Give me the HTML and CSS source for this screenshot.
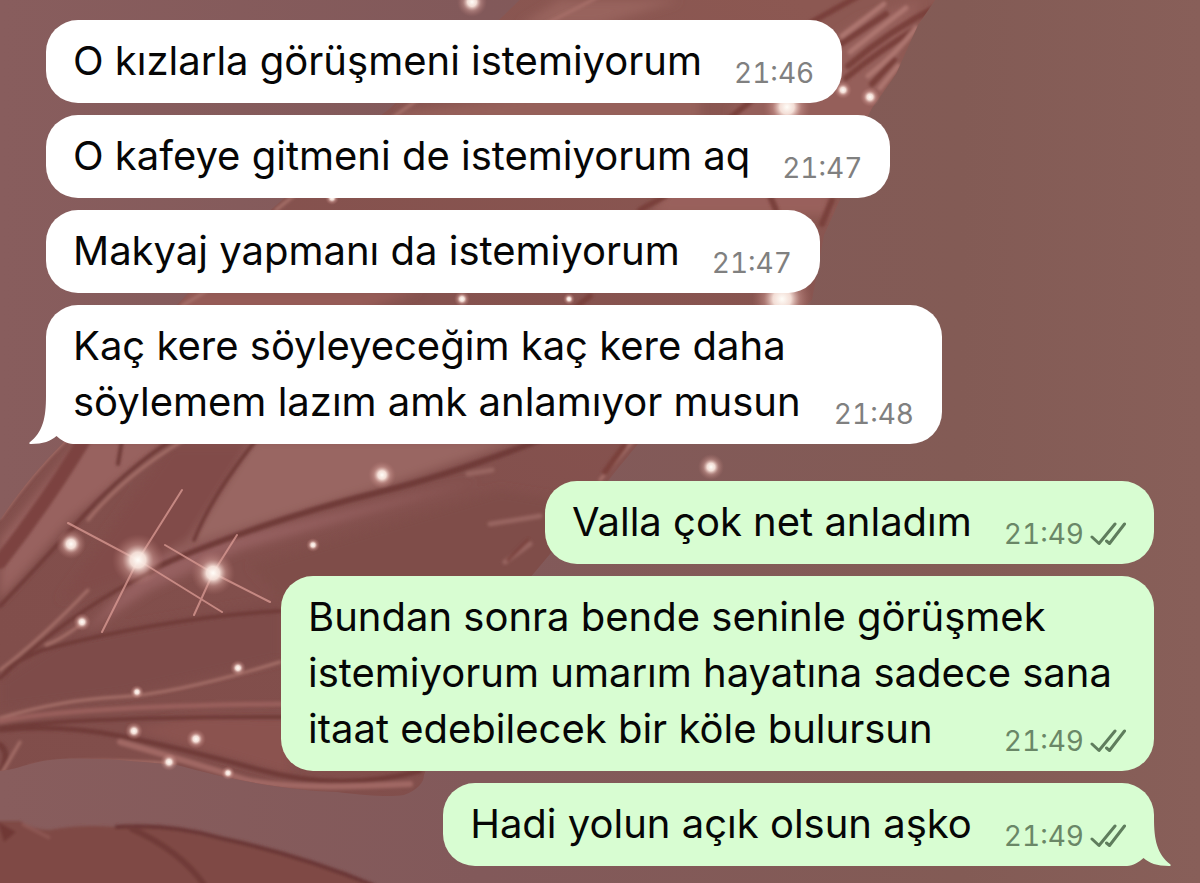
FILE: index.html
```
<!DOCTYPE html>
<html lang="tr">
<head>
    <meta charset="UTF-8">
    <meta name="viewport" content="width=device-width, initial-scale=1.0">
    <title>Sohbet</title>
    <link rel="stylesheet" href="styles.css">
</head>
<body>
    <svg class="wallpaper" viewBox="0 0 1200 883" preserveAspectRatio="xMidYMid slice" aria-hidden="true">
        <defs>
            <linearGradient id="base" x1="0" x2="1">
                <stop offset="0" stop-color="#885d5d"/>
                <stop offset=".4" stop-color="#82595a"/>
                <stop offset=".8" stop-color="#835b55"/>
                <stop offset="1" stop-color="#885f59"/>
            </linearGradient>
            <linearGradient id="wing" x1="0" y1="1" x2=".8" y2="0">
                <stop offset="0" stop-color="#804d4a"/>
                <stop offset=".5" stop-color="#83504d"/>
                <stop offset="1" stop-color="#8c5852"/>
            </linearGradient>
            <radialGradient id="glow">
                <stop offset="0" stop-color="#fffdf8"/>
                <stop offset=".3" stop-color="#f8e4dc" stop-opacity=".95"/>
                <stop offset=".6" stop-color="#dca9a2" stop-opacity=".4"/>
                <stop offset="1" stop-color="#b87872" stop-opacity="0"/>
            </radialGradient>
            <filter id="soft2" x="-10%" y="-10%" width="120%" height="120%"><feGaussianBlur stdDeviation="1.500"/></filter>
            <filter id="soft6" x="-20%" y="-20%" width="140%" height="140%"><feGaussianBlur stdDeviation="5"/></filter>
            <clipPath id="wingClip">
                <path d="M530-10L500 19C450 60 415 84 388 110C340 145 305 180 280 202C230 245 205 275 180 302C125 355 90 405 63 443C40 466 20 490 0 520V771C20 769 35 760 60 759C100 757 140 762 177 765C220 777 280 790 337 792C370 796 390 797 404 795C418 790 424 782 424 775C450 700 500 640 528 580L560 542C600 490 625 460 638 444C700 380 770 340 812 300L824 235L840 200C850 160 860 130 872 108L896 74L918 25L942-10Z"/>
            </clipPath>
        </defs>
        <rect width="1200" height="883" fill="url(#base)"/>

        <g clip-path="url(#wingClip)">
            <rect width="1000" height="883" fill="url(#wing)"/>
            <!-- broad folds -->
            <g filter="url(#soft6)">
                <path d="M80 440L170 440L70 520L0 600V540Z" fill="#98625e"/>
                <path d="M255 440H520L380 488L190 545L160 560L200 500Z" fill="#996662"/>
                <path d="M170 445H250L190 540L120 580L60 600Z" fill="#814b48"/>
                <path d="M480 480L240 550L150 590L85 632L150 560L240 535Z" fill="#966160"/>
                <path d="M500 490L250 565L290 610H560V500Z" fill="#7f4e4a"/>
                <path d="M0 680L60 640L280 600V660L120 695L0 710Z" fill="#7e4c49"/>
                <path d="M130 730L200 715L290 718V775Z" fill="#8b5250"/>
                <path d="M400 112L560 92H700V122H400Z" fill="#96605a"/>
                <path d="M560 0H680L600 25H520Z" fill="#98635d"/>
                <path d="M730 110L860 20L920 0L870 130H740Z" fill="#955f5a"/>
                <path d="M190 290L420 290L360 312H170Z" fill="#965b56"/>
                <path d="M670 185H830V215H650Z" fill="#99615b"/>
            </g>
            <g filter="url(#soft2)" fill="none" stroke-linecap="round">
                <g stroke="#6f3b38" stroke-width="4">
                    <path d="M84 440Q48 500 0 562" stroke="#7c4341" stroke-width="14"/>
                    <path d="M172 440Q125 470 78 522T0 606"/>
                    <path d="M122 440L118 464"/>
                    <path d="M256 440Q212 495 194 540"/>
                    <path d="M540 440Q450 475 380 492T235 536T150 572" stroke-width="6"/>
                    <path d="M150 572Q85 605 28 653L0 678"/>
                    <path d="M280 611Q165 618 42 650L0 670"/>
                    <path d="M0 728Q70 717 285 717"/>
                    <path d="M0 730Q60 724 120 736T260 770T420 771" stroke-width="5"/>
                    <path d="M0 745Q10 752 2 770" stroke-width="6"/>
                </g>
                <g stroke="#a67069" stroke-width="3">
                    <path d="M66 440Q30 475 0 518"/>
                    <path d="M184 440Q125 475 88 520"/>
                    <path d="M88 590Q40 640 0 670"/>
                    <path d="M80 625Q60 640 46 645"/>
                    <path d="M0 718Q60 700 118 697T280 662"/>
                    <path d="M0 721Q80 706 285 704" stroke-width="5" stroke="#995f5b"/>
                    <path d="M30 767Q80 757 175 764"/>
                    <path d="M120 742Q200 765 240 778T410 784" stroke-width="6" stroke="#a06863"/>
                    <path d="M545 24Q570 12 600-4" stroke="#a76f69"/>
                    <path d="M392 118L420 98"/>
                    <path d="M276 210L296 194M182 306L208 290"/>
                    <path d="M468 474L492 470M490 524L540 516M505 562L530 544M536 580L560 554" stroke-width="5" stroke="#986560"/>
                    <path d="M600 480L634 440"/>
                    <path d="M20 742L0 776"/>
                </g>
                <!-- ruffled tip -->
                <g stroke="#793f3b" stroke-width="6">
                    <path d="M812 22L862-6"/>
                    <path d="M848 66Q890 30 938 6"/>
                    <path d="M838 46L886 14"/>
                    <path d="M846 78Q880 50 914 30"/>
                    <path d="M872 84L894 60"/>
                    <path d="M725 122L752 100"/>
                    <path d="M640 210L665 196M776 210L770 196M822 224L832 200"/>
                    <path d="M570 312L590 296M605 472L624 446"/>
                    <path d="M508 560L528 540" stroke-width="3"/>
                </g>
                <g stroke="#ad766f" stroke-width="5">
                    <path d="M842 36Q866 18 884 4"/>
                    <path d="M850 52Q880 28 906 8"/>
                    <path d="M868 76Q896 54 916 28"/>
                    <path d="M880 88L898 66"/>
                </g>
            </g>
        </g>

        <!-- lower leaf -->
        <g filter="url(#soft2)">
            <path d="M-5 821H20Q34 830 50 830Q80 824 115 827Q170 825 220 840Q300 855 375 886H-5Z" fill="#7f4844"/>
            <path d="M115 827Q170 823 220 838Q300 855 375 886" fill="none" stroke="#693634" stroke-width="4"/>
            <path d="M130 828Q180 850 205 886" fill="none" stroke="#703a37" stroke-width="6"/>
            <path d="M22 824L50 838" fill="none" stroke="#905955" stroke-width="3"/>
            <path d="M-2 822L16 832L4 842Z" fill="#6f3836"/>
        </g>

        <!-- sparkles -->
        <g fill="none" stroke="#dc9c95" stroke-width="2" opacity=".75" stroke-linecap="round">
            <path d="M68 523L138 560L222 612M182 490L138 560L102 632"/>
            <path d="M165 545L213 573L270 602M237 535L213 573L194 615"/>
        </g>
        <g fill="url(#glow)">
            <circle cx="138" cy="560" r="26"/>
            <circle cx="213" cy="573" r="22"/>
            <circle cx="71" cy="544" r="15"/>
            <circle cx="382" cy="475" r="14"/>
            <circle cx="711" cy="467" r="13"/>
            <circle cx="472" cy="2" r="15"/>
            <circle cx="787" cy="107" r="24"/>
            <circle cx="782" cy="299" r="30"/>
            <circle cx="843" cy="90" r="9"/>
            <circle cx="870" cy="97" r="10"/>
            <circle cx="462" cy="299" r="8"/>
            <circle cx="569" cy="299" r="6"/>
            <circle cx="332" cy="198" r="7"/>
            <circle cx="313" cy="545" r="7"/>
            <circle cx="82" cy="622" r="9"/>
            <circle cx="238" cy="668" r="8"/>
            <circle cx="137" cy="692" r="7"/>
            <circle cx="134" cy="731" r="9"/>
            <circle cx="196" cy="739" r="10"/>
            <circle cx="169" cy="762" r="9"/>
            <circle cx="228" cy="773" r="7"/>
        </g>
    </svg>

    <svg width="0" height="0" class="defs" aria-hidden="true">
        <symbol id="ticks" viewBox="0 0 36 24">
            <path d="M2 15l7 6.500L25 2M16.500 19l3 2.500L34.500 2"/>
        </symbol>
        <symbol id="tail" viewBox="0 0 44 48">
            <path d="M17 0C17 22 14 36 .5 46.500C0 47.500 .5 48 2 48C14 48 22 45 27.500 40C32 44 38 48 44 48V0Z"/>
        </symbol>
    </svg>

    <main class="chat">
        <p class="bubble received">O kızlarla görüşmeni istemiyorum<span class="meta"><time>21:46</time></span></p>
        <p class="bubble received">O kafeye gitmeni de istemiyorum aq<span class="meta"><time>21:47</time></span></p>
        <p class="bubble received">Makyaj yapmanı da istemiyorum<span class="meta"><time>21:47</time></span></p>
        <p class="bubble received last">Kaç kere söyleyeceğim kaç kere daha söylemem lazım amk anlamıyor musun<span class="meta"><time>21:48</time></span><svg class="tail"><use href="#tail"/></svg></p>
        <p class="bubble sent first">Valla çok net anladım<span class="meta"><time>21:49</time><svg class="ticks"><use href="#ticks"/></svg></span></p>
        <p class="bubble sent">Bundan sonra bende seninle görüşmek istemiyorum umarım hayatına sadece sana itaat edebilecek bir köle bulursun<span class="meta"><time>21:49</time><svg class="ticks"><use href="#ticks"/></svg></span></p>
        <p class="bubble sent last">Hadi yolun açık olsun aşko<span class="meta"><time>21:49</time><svg class="ticks"><use href="#ticks"/></svg></span><svg class="tail"><use href="#tail"/></svg></p>
    </main>
</body>
</html>
```
FILE: styles.css
```
* {
    box-sizing: border-box;
}
body {
    position: relative;
    margin: 0;
    min-height: 100vh;
    background-color: #845a57;
    font-family: Inter, "Liberation Sans", sans-serif;
}
.wallpaper {
    position: absolute;
    top: 0;
    left: 0;
    width: 100%;
    height: 100%;
}
.defs {
    position: absolute;
}
.chat {
    position: relative;
    display: flex;
    flex-direction: column;
    gap: 12px;
    padding: 20px 46px 16px;
}
.bubble {
    position: relative;
    margin: 0;
    padding: 13px 28px 14px 27px;
    border-radius: 32px;
    font-size: 40px;
    line-height: 56px;
    color: #060606;
}
.received {
    align-self: flex-start;
    max-width: 896px;
    background-color: #ffffff;
}
.sent {
    align-self: flex-end;
    max-width: 873px;
    background-color: #d8fdd2;
}
/* the corner under the tail is drawn by the tail itself */
.received.last {
    border-bottom-left-radius: 0;
    background: linear-gradient(#ffffff, #ffffff) no-repeat 27px 0 / 100% 100%, linear-gradient(#ffffff, #ffffff) no-repeat 0 0 / 28px calc(100% - 47px);
}
.sent.last {
    border-bottom-right-radius: 0;
    background: linear-gradient(#d8fdd2, #d8fdd2) no-repeat 0 0 / calc(100% - 27px) 100%, linear-gradient(#d8fdd2, #d8fdd2) no-repeat 100% 0 / 28px calc(100% - 47px);
}
.first {
    margin-top: 25px;
}
.meta {
    float: right;
    display: flex;
    align-items: center;
    gap: 6px;
    height: 32px;
    margin: 24px 0 0 32px;
    font-size: 28px;
    line-height: 32px;
    font-variant-numeric: tabular-nums;
    color: #808080;
}
.sent .meta {
    color: #6a8767;
}
.ticks {
    width: 36px;
    height: 24px;
    fill: none;
    stroke: #5f7d5d;
    stroke-width: 3;
    stroke-linecap: round;
    stroke-linejoin: round;
}
.tail {
    position: absolute;
    bottom: 0;
    left: -17px;
    width: 44px;
    height: 48px;
    fill: #ffffff;
}
.sent .tail {
    left: auto;
    right: -17px;
    fill: #d8fdd2;
    transform: scaleX(-1);
}
```
